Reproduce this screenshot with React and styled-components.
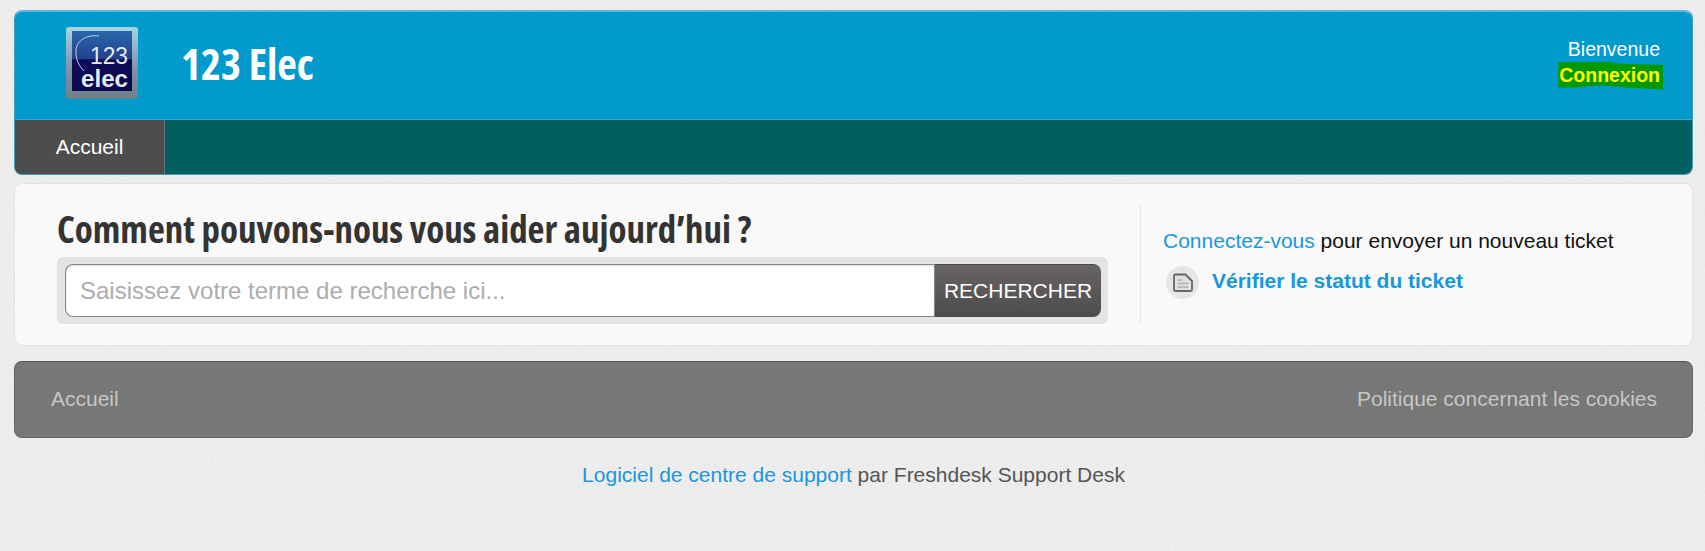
import React from "react";
import styled, { createGlobalStyle } from "styled-components";

const Global = createGlobalStyle`
  html, body { margin: 0; padding: 0; }
  body { background: #eeeeee; font-family: "Liberation Sans", Arial, sans-serif; }
  a { text-decoration: none; color: #1a97dc; }
`;

const Page = styled.div`
  height: 551px;
  padding: 10px 12px 0 14px;
  box-sizing: border-box;
  overflow: hidden;
  display: flex;
  flex-direction: column;
  position: relative;
`;

const Texture = styled.svg`
  position: absolute;
  inset: 0;
  width: 100%;
  height: 100%;
  z-index: -1;
`;

const Header = styled.header`
  height: 165px;
  flex: none;
  border-radius: 8px;
  overflow: hidden;
  box-sizing: border-box;
  display: flex;
  flex-direction: column;
  border: 1px solid #3f9db4;
  border-top: 2px solid #5cb8dc;
`;

const Banner = styled.div`
  height: 108px;
  flex: none;
  box-sizing: border-box;
  background: #009acd;
  border-bottom: 1px solid #3ba3c6;
  display: flex;
  align-items: center;
  padding: 0 32px 0 50px;
`;

const LogoMark = styled.svg`
  flex: none;
  margin-bottom: 6px;
`;

const Brand = styled.h1`
  margin: 0 0 0 42px;
  color: #fff;
  font: 700 42.7px/1 "Open Sans", sans-serif;
  font-stretch: 75%;
  white-space: nowrap;
  position: relative;
  top: -1px;
`;

const Welcome = styled.div`
  margin-left: auto;
  text-align: right;
  color: #fff;
  font-size: 19.5px;
  line-height: 26px;
  position: relative;
  top: -4px;
`;

const LoginWrap = styled.div`
  position: relative;
  display: inline-block;
  color: #ffff00;
  font-weight: 700;
  line-height: 26px;
  &::before {
    content: "";
    position: absolute;
    left: -1px;
    right: -3px;
    top: 0;
    bottom: -2px;
    background: #009a00;
    clip-path: polygon(0 0, 45% 0, 60% 8%, 100% 12%, 100% 100%, 70% 95%, 40% 85%, 15% 93%, 0 93%);
  }
  span { position: relative; }
`;

const Nav = styled.nav`
  flex: 1;
  background: #015f60;
  display: flex;
`;

const NavItem = styled.a`
  width: 149px;
  background: #4d4d4d;
  border-right: 1px solid #6f6f6f;
  font-size: 21px;
  display: flex;
  align-items: center;
  justify-content: center;
  color: #ffffff;
`;

const Card = styled.section`
  margin-top: 8px;
  height: 163px;
  flex: none;
  box-sizing: border-box;
  background: #f9f9f9;
  border: 1px solid #e3e3e3;
  border-radius: 8px;
  display: flex;
  padding: 20px 0 21px 42px;
`;

const SearchCol = styled.div`
  width: 1051px;
  flex: none;
`;

const Title = styled.h2`
  margin: 3px 0 0;
  color: #333;
  font: 700 36.9px/44px "Open Sans", sans-serif;
  font-stretch: 75%;
  white-space: nowrap;
`;

const SearchBox = styled.form`
  margin: 6px 0 0;
  height: 67px;
  box-sizing: border-box;
  padding: 7px 7px 7px 8px;
  background: #e4e4e4;
  border-radius: 6px;
  display: flex;
`;

const SearchInput = styled.input`
  flex: 1;
  min-width: 0;
  border: 1px solid #868686;
  border-right: none;
  border-radius: 8px 0 0 8px;
  background: #fff;
  padding: 0 14px;
  font: 24px "Liberation Sans", Arial, sans-serif;
  box-shadow: inset 0 1px 2px rgba(0, 0, 0, 0.15);
  outline: none;
  &::placeholder { color: #adadad; opacity: 1; }
`;

const SearchButton = styled.button`
  width: 167px;
  flex: none;
  border: none;
  border-top: 1px solid #4a4a4a;
  border-left: 1px solid #888;
  border-radius: 0 8px 8px 0;
  background: linear-gradient(#686464, #4c4c4c);
  color: #fff;
  font: 21px "Liberation Sans", Arial, sans-serif;
  padding: 0;
`;

const SideCol = styled.aside`
  flex: 1;
  margin-left: 32px;
  border-left: 1px solid #e6e6e6;
  padding: 25px 0 0 22px;
`;

const SideLine = styled.p`
  margin: 0;
  font-size: 21px;
  line-height: 24px;
  color: #111;
  white-space: nowrap;
`;

const StatusRow = styled.div`
  display: flex;
  align-items: center;
  margin: 13px 0 0 3px;
`;

const IconDisc = styled.span`
  width: 33px;
  height: 33px;
  border-radius: 50%;
  background: #e6e6e6;
  display: flex;
  align-items: center;
  justify-content: center;
  flex: none;
`;

const StatusLink = styled.a`
  margin-left: 13px;
  font-size: 21px;
  font-weight: 700;
  position: relative;
  top: -2px;
`;

const FooterBar = styled.footer`
  margin-top: 15px;
  height: 77px;
  flex: none;
  box-sizing: border-box;
  background: #777777;
  border: 1px solid #666;
  border-top-color: #555;
  border-radius: 8px;
  display: flex;
  align-items: center;
  justify-content: space-between;
  padding: 0 35px 2px 36px;
`;

const FooterLink = styled.a`
  color: #c6c6c6;
  font-size: 21px;
`;

const Credit = styled.div`
  margin-top: 25px;
  text-align: center;
  font-size: 21px;
  line-height: 24px;
  color: #555;
`;

const Logo = () => (
  <LogoMark width="74" height="74" viewBox="0 0 74 74" aria-hidden="true">
    <defs>
      <linearGradient id="frame" x1="0" y1="0" x2="0" y2="1">
        <stop offset="0" stopColor="#a6d6e2" />
        <stop offset="0.6" stopColor="#7f8fa8" />
        <stop offset="1" stopColor="#6f8088" />
      </linearGradient>
      <linearGradient id="inner" x1="0" y1="0" x2="0" y2="1">
        <stop offset="0" stopColor="#2a68ac" />
        <stop offset="0.46" stopColor="#23408c" />
        <stop offset="0.48" stopColor="#0e0c58" />
        <stop offset="1" stopColor="#0a0a4d" />
      </linearGradient>
    </defs>
    <rect x="1" y="1" width="72" height="72" rx="3" fill="url(#frame)" />
    <rect x="7" y="5" width="60" height="60" fill="url(#inner)" />
    <path d="M34 10 C21 8 10 16 11 26 C11 34 14 40 19 45" stroke="#c3d3e6" strokeWidth="1" fill="none" />
    <text x="63" y="38" textAnchor="end" fill="#e4eaf2" fontFamily="Liberation Sans, sans-serif" fontSize="23" textLength="38" lengthAdjust="spacingAndGlyphs">123</text>
    <text x="63" y="61" textAnchor="end" fill="#e4eaf2" fontFamily="Liberation Sans, sans-serif" fontWeight="700" fontSize="23" textLength="47" lengthAdjust="spacingAndGlyphs">elec</text>
  </LogoMark>
);

const TicketIcon = () => (
  <svg width="22" height="20" viewBox="0 0 22 20" aria-hidden="true">
    <path d="M2 3 a1.5 1.5 0 0 1 1.5-1.5 H13.5 L20 8 V16.5 a1.5 1.5 0 0 1-1.5 1.5 H3.5 a1.5 1.5 0 0 1-1.5-1.5 Z" fill="#e0e0e0" stroke="#666" strokeWidth="1.8" strokeLinejoin="round" />
    <path d="M5.5 7 H10 M5.5 10.5 H16.5 M5.5 14 H16.5" stroke="#b0b0b0" strokeWidth="1.6" />
  </svg>
);

export default function App() {
  return (
    <>
      <Global />
      <Page>
        <Texture aria-hidden="true">
          <filter id="paper">
            <feTurbulence type="fractalNoise" baseFrequency="0.35 0.5" numOctaves="3" seed="4" />
            <feColorMatrix values="0 0 0 0 0.5  0 0 0 0 0.5  0 0 0 0 0.5  0.18 0 0 0 -0.06" />
          </filter>
          <rect width="100%" height="100%" filter="url(#paper)" />
        </Texture>
        <Header>
          <Banner>
            <Logo />
            <Brand>123 Elec</Brand>
            <Welcome>
              <div>Bienvenue</div>
              <LoginWrap><span>Connexion</span></LoginWrap>
            </Welcome>
          </Banner>
          <Nav>
            <NavItem href="#">Accueil</NavItem>
          </Nav>
        </Header>
        <Card>
          <SearchCol>
            <Title>Comment pouvons-nous vous aider aujourd’hui ?</Title>
            <SearchBox onSubmit={(e) => e.preventDefault()}>
              <SearchInput placeholder="Saisissez votre terme de recherche ici..." />
              <SearchButton type="submit">RECHERCHER</SearchButton>
            </SearchBox>
          </SearchCol>
          <SideCol>
            <SideLine><a href="#">Connectez-vous</a> pour envoyer un nouveau ticket</SideLine>
            <StatusRow>
              <IconDisc><TicketIcon /></IconDisc>
              <StatusLink href="#">Vérifier le statut du ticket</StatusLink>
            </StatusRow>
          </SideCol>
        </Card>
        <FooterBar>
          <FooterLink href="#">Accueil</FooterLink>
          <FooterLink href="#">Politique concernant les cookies</FooterLink>
        </FooterBar>
        <Credit><a href="#">Logiciel de centre de support</a> par Freshdesk Support Desk</Credit>
      </Page>
    </>
  );
}
